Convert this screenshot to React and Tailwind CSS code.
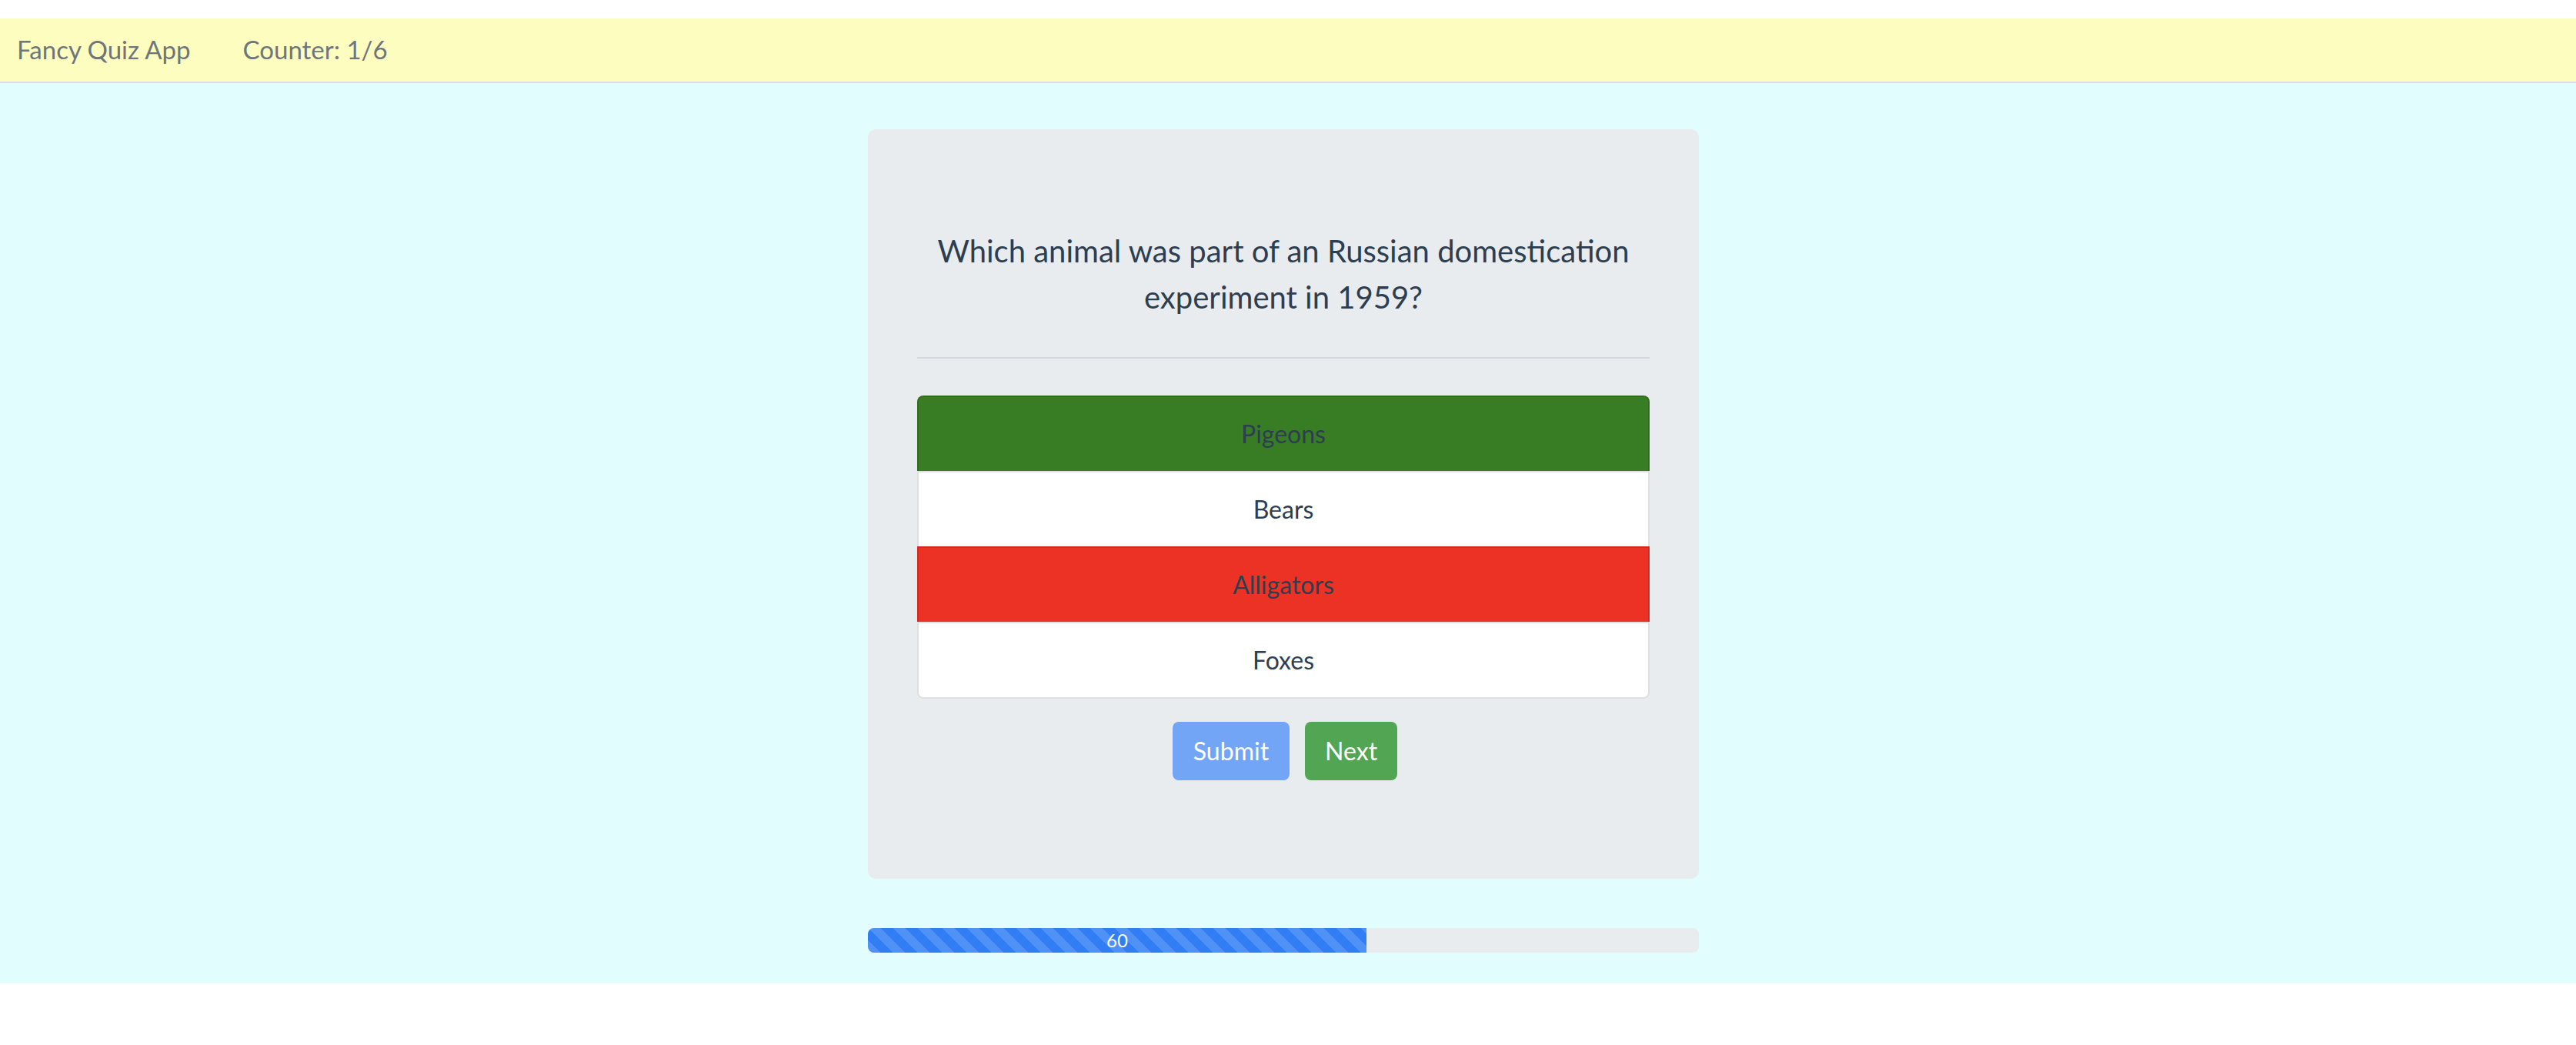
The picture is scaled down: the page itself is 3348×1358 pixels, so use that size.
import { useState } from 'react';

const answers = [
  { label: 'Pigeons', state: 'correct' },
  { label: 'Bears', state: '' },
  { label: 'Alligators', state: 'wrong' },
  { label: 'Foxes', state: '' },
];

function Answer({ label, state, first, last }) {
  let bg = 'bg-white';
  if (state === 'correct') bg = 'bg-[#387d23]';
  if (state === 'wrong') bg = 'bg-[#ec3224]';
  return (
    <div
      className={`${bg} h-[98px] flex items-center justify-center border-2 border-black/[0.12] ${
        last ? 'border-b-2 rounded-b-[8px] h-[100px]' : 'border-b-0'
      } ${first ? 'rounded-t-[8px]' : ''} text-[32px] text-[#2c3e50]`}
    >
      {label}
    </div>
  );
}

export default function App() {
  const [counter] = useState(1);
  const total = 6;
  const progress = 60;

  return (
    <div className="bg-white pt-[24px] font-['Lato','Liberation_Sans',sans-serif]">
      {/* Navbar */}
      <nav className="h-[84px] bg-[#fdfdbf] border-b-2 border-[#d9dee0] flex items-center pl-[22px] gap-[68px] text-[33px] text-[#6f767b]">
        <span>Fancy Quiz App</span>
        <span>Counter: {counter}/{total}</span>
      </nav>

      {/* Quiz area */}
      <main className="bg-[#e1fdfe] pt-[60px] pb-[40px] pr-[12px]">
        <div className="w-[1080px] mx-auto bg-[#e9ecef] rounded-[10px] px-[64px] pt-[128px] pb-[128px]">
          <h3 className="text-[40px] leading-[60px] text-center text-[#2c3e50] mb-[16px]">
            Which animal was part of an Russian domestication experiment in 1959?
          </h3>
          <hr className="mt-[48px] mb-[48px] border-0 border-t-2 border-[#d3d7db]" />
          <div>
            {answers.map((a, i) => (
              <Answer key={a.label} {...a} first={i === 0} last={i === answers.length - 1} />
            ))}
          </div>
          <div className="mt-[30px] flex justify-center gap-[20px] pl-[4px]">
            <button className="h-[76px] px-[27px] rounded-[8px] bg-[#72a5f6] text-white text-[32px]">
              Submit
            </button>
            <button className="h-[76px] px-[26px] rounded-[8px] bg-[#52a552] text-white text-[32px]">
              Next
            </button>
          </div>
        </div>

        {/* Progress */}
        <div className="w-[1080px] mx-auto mt-[64px] h-[32px] rounded-[8px] bg-[#e9ecef] overflow-hidden flex">
          <div
            className="h-full bg-[#317ef4] bg-[linear-gradient(45deg,rgba(255,255,255,.15)_25%,transparent_25%,transparent_50%,rgba(255,255,255,.15)_50%,rgba(255,255,255,.15)_75%,transparent_75%,transparent)] bg-[length:32px_32px] text-white text-[24px] leading-[32px] text-center"
            style={{ width: `${progress}%` }}
          >
            {progress}
          </div>
        </div>
      </main>
    </div>
  );
}
